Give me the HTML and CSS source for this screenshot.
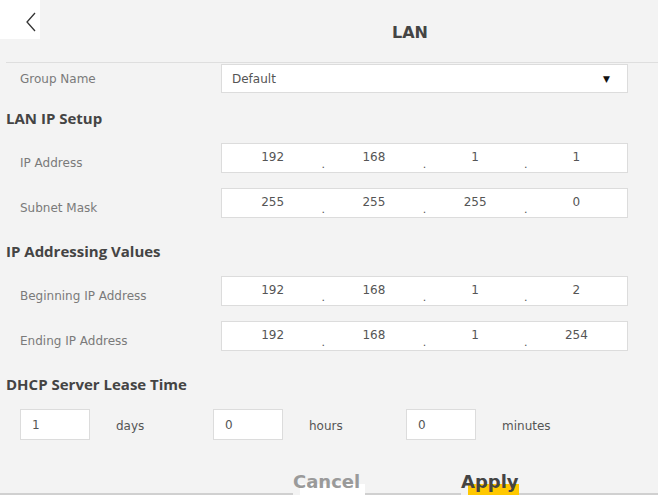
FILE: index.html
```html
<!DOCTYPE html>
<html lang="en">
<head>
  <meta charset="UTF-8" />
  <title>LAN</title>
  <link rel="stylesheet" href="styles.css">
</head>
<body>
  <div class="page">
    <div class="header">
      <div class="back">
        <svg width="12" height="20" viewBox="0 0 12 20"><path d="M10 1 L2 10 L10 19" fill="none" stroke="#333" stroke-width="1.3"/></svg>
      </div>
      <h1>LAN</h1>
    </div>

    <div class="row first">
      <label>Group Name</label>
      <div class="box select">
        <span>Default</span>
        <span class="arrow">▼</span>
      </div>
    </div>

    <h2>LAN IP Setup</h2>
    <div class="row">
      <label>IP Address</label>
      <div class="box ip">
        <span class="seg">192</span><span class="dot">.</span><span class="seg">168</span><span class="dot">.</span><span class="seg">1</span><span class="dot">.</span><span class="seg">1</span>
      </div>
    </div>
    <div class="row">
      <label>Subnet Mask</label>
      <div class="box ip">
        <span class="seg">255</span><span class="dot">.</span><span class="seg">255</span><span class="dot">.</span><span class="seg">255</span><span class="dot">.</span><span class="seg">0</span>
      </div>
    </div>

    <h2 class="gap">IP Addressing Values</h2>
    <div class="row">
      <label>Beginning IP Address</label>
      <div class="box ip">
        <span class="seg">192</span><span class="dot">.</span><span class="seg">168</span><span class="dot">.</span><span class="seg">1</span><span class="dot">.</span><span class="seg">2</span>
      </div>
    </div>
    <div class="row">
      <label>Ending IP Address</label>
      <div class="box ip">
        <span class="seg">192</span><span class="dot">.</span><span class="seg">168</span><span class="dot">.</span><span class="seg">1</span><span class="dot">.</span><span class="seg">254</span>
      </div>
    </div>

    <h2 class="gap">DHCP Server Lease Time</h2>
    <div class="lease">
      <div class="unit"><div class="box small">1</div><span>days</span></div>
      <div class="unit"><div class="box small">0</div><span>hours</span></div>
      <div class="unit"><div class="box small">0</div><span>minutes</span></div>
    </div>

    <div class="actions">
      <button class="btn cancel">Cancel</button>
      <button class="btn apply">Apply</button>
    </div>
  </div>
</body>
</html>
```

FILE: styles.css
```css
* {
    margin: 0;
    padding: 0;
    box-sizing: border-box;
}

body {
    font-family: "DejaVu Sans", sans-serif;
    background: #f3f3f3;
    color: #555;
    width: 658px;
    height: 495px;
    overflow: hidden;
}

.page {
    height: 495px;
    border-bottom: 2px solid #d0d0d0;
}

.header {
    display: flex;
    height: 63px;
    margin-left: 6px;
    border-bottom: 1px solid #dedede;
}

.back {
    width: 40px;
    height: 39px;
    margin-left: -6px;
    background: #fff;
    display: flex;
    justify-content: flex-end;
    padding: 12px 3px 0 0;
}

h1 {
    flex: 1;
    text-align: center;
    padding: 23px 0 0 122px;
    font-size: 16px;
    color: #444;
}

h2 {
    font-family: "Open Sans", sans-serif;
    font-size: 15px;
    line-height: 20px;
    color: #444;
    margin: 15px 0 15px 6px;
}

h2.gap {
    margin-top: 23px;
}

.row {
    display: flex;
    align-items: center;
    height: 30px;
    margin-bottom: 15px;
}

.row.first {
    height: 29px;
    margin: 1px 0 0;
}

label {
    width: 221px;
    padding: 9px 0 0 20px;
    font-size: 12px;
    color: #7a7a7a;
}

.row.first label {
    padding-top: 0;
}

.box {
    background: #fff;
    border: 1px solid #dcdcdc;
    height: 100%;
    font-size: 12px;
    color: #555;
}

.select {
    width: 407px;
    display: flex;
    align-items: center;
    justify-content: space-between;
    padding: 0 17px 0 10px;
}

.arrow {
    font-size: 9px;
    color: #111;
}

.ip {
    width: 407px;
    display: flex;
    align-items: center;
}

.seg {
    flex: 1;
    text-align: center;
    padding-bottom: 2px;
}

.dot {
    width: 0;
    display: flex;
    justify-content: center;
    padding-top: 12px;
    font-size: 11px;
}

.lease {
    display: grid;
    grid-template-columns: repeat(3, 193px);
    padding-left: 20px;
}

.unit {
    display: flex;
    align-items: center;
    gap: 26px;
    font-size: 12px;
    color: #555;
}

.unit > span {
    padding-top: 3px;
}

.small {
    width: 70px;
    height: 31px;
    display: flex;
    align-items: center;
    padding-left: 11px;
}

.actions {
    display: flex;
    margin-top: 29px;
    padding-left: 293px;
}

.btn {
    border: none;
    font-family: "DejaVu Sans", sans-serif;
    font-size: 18px;
    font-weight: bold;
    height: 26px;
    line-height: 18px;
    padding: 0;
}

.cancel {
    width: 72px;
    text-align: left;
    color: #9a9a9a;
    background: linear-gradient(#f3f3f3 15px, #fff 15px) no-repeat 7px 0 / 65px 100%;
    background-color: #f3f3f3;
    margin-right: 96px;
}

.apply {
    width: 58px;
    text-align: left;
    color: #444;
    background: linear-gradient(#f3f3f3 15px, #ffc800 15px) no-repeat 7px 0 / 51px 100%;
    background-color: #f3f3f3;
}
```
